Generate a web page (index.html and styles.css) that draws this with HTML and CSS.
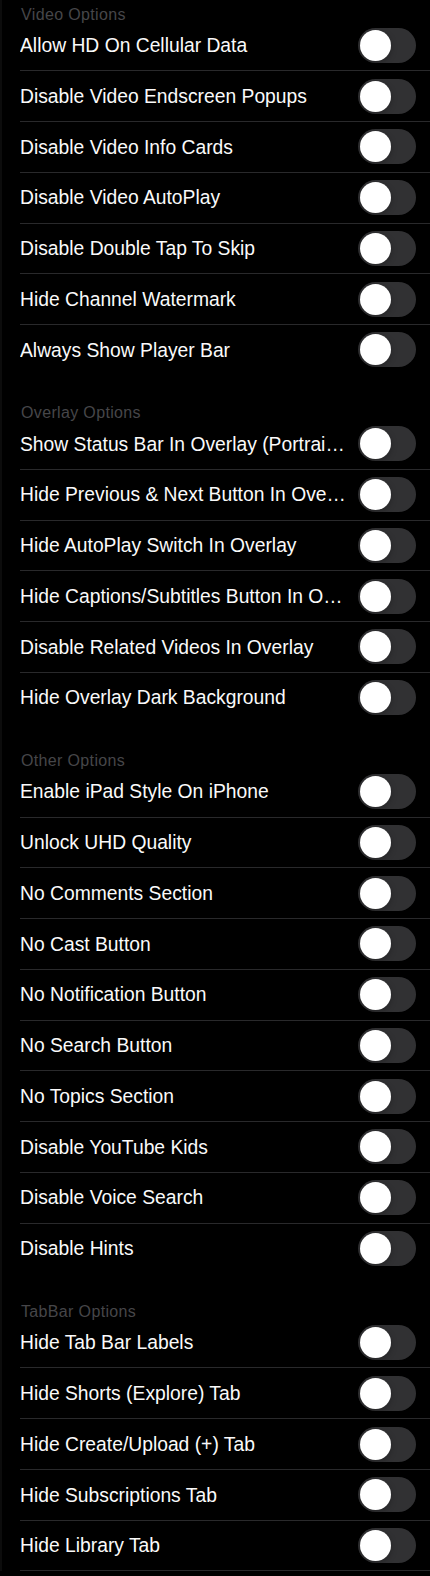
FILE: index.html
```html
<!DOCTYPE html>
<html lang="en">
<head>
<meta charset="utf-8">
<title>Settings</title>
<link rel="stylesheet" href="styles.css">
</head>
<body>
<main class="page">
  <div class="list">
    <section class="group">
      <h2 class="group-title">Video Options</h2>
      <div class="row"><span class="label">Allow HD On Cellular Data</span><span class="switch"><span class="knob"></span></span></div>
      <div class="row"><span class="label">Disable Video Endscreen Popups</span><span class="switch"><span class="knob"></span></span></div>
      <div class="row"><span class="label">Disable Video Info Cards</span><span class="switch"><span class="knob"></span></span></div>
      <div class="row"><span class="label">Disable Video AutoPlay</span><span class="switch"><span class="knob"></span></span></div>
      <div class="row"><span class="label">Disable Double Tap To Skip</span><span class="switch"><span class="knob"></span></span></div>
      <div class="row"><span class="label">Hide Channel Watermark</span><span class="switch"><span class="knob"></span></span></div>
      <div class="row"><span class="label">Always Show Player Bar</span><span class="switch"><span class="knob"></span></span></div>
    </section>
    <section class="group">
      <h2 class="group-title">Overlay Options</h2>
      <div class="row"><span class="label">Show Status Bar In Overlay (Portrai…</span><span class="switch"><span class="knob"></span></span></div>
      <div class="row"><span class="label">Hide Previous &amp; Next Button In Ove…</span><span class="switch"><span class="knob"></span></span></div>
      <div class="row"><span class="label">Hide AutoPlay Switch In Overlay</span><span class="switch"><span class="knob"></span></span></div>
      <div class="row"><span class="label">Hide Captions/Subtitles Button In O…</span><span class="switch"><span class="knob"></span></span></div>
      <div class="row"><span class="label">Disable Related Videos In Overlay</span><span class="switch"><span class="knob"></span></span></div>
      <div class="row"><span class="label">Hide Overlay Dark Background</span><span class="switch"><span class="knob"></span></span></div>
    </section>
    <section class="group">
      <h2 class="group-title">Other Options</h2>
      <div class="row"><span class="label">Enable iPad Style On iPhone</span><span class="switch"><span class="knob"></span></span></div>
      <div class="row"><span class="label">Unlock UHD Quality</span><span class="switch"><span class="knob"></span></span></div>
      <div class="row"><span class="label">No Comments Section</span><span class="switch"><span class="knob"></span></span></div>
      <div class="row"><span class="label">No Cast Button</span><span class="switch"><span class="knob"></span></span></div>
      <div class="row"><span class="label">No Notification Button</span><span class="switch"><span class="knob"></span></span></div>
      <div class="row"><span class="label">No Search Button</span><span class="switch"><span class="knob"></span></span></div>
      <div class="row"><span class="label">No Topics Section</span><span class="switch"><span class="knob"></span></span></div>
      <div class="row"><span class="label">Disable YouTube Kids</span><span class="switch"><span class="knob"></span></span></div>
      <div class="row"><span class="label">Disable Voice Search</span><span class="switch"><span class="knob"></span></span></div>
      <div class="row"><span class="label">Disable Hints</span><span class="switch"><span class="knob"></span></span></div>
    </section>
    <section class="group">
      <h2 class="group-title">TabBar Options</h2>
      <div class="row"><span class="label">Hide Tab Bar Labels</span><span class="switch"><span class="knob"></span></span></div>
      <div class="row"><span class="label">Hide Shorts (Explore) Tab</span><span class="switch"><span class="knob"></span></span></div>
      <div class="row"><span class="label">Hide Create/Upload (+) Tab</span><span class="switch"><span class="knob"></span></span></div>
      <div class="row"><span class="label">Hide Subscriptions Tab</span><span class="switch"><span class="knob"></span></span></div>
      <div class="row"><span class="label">Hide Library Tab</span><span class="switch"><span class="knob"></span></span></div>
    </section>
  </div>
</main>
</body>
</html>
```

FILE: styles.css
```css
html, body {
  margin: 0;
  padding: 0;
  background: #000;
}

body {
  font-family: "Liberation Sans", Arial, sans-serif;
  color: #fff;
  overflow: hidden;
}

.page {
  min-height: 1576px;
  box-shadow: inset 2px 0 0 #0c0c0c;
}

.list {
  margin-top: -22.8px;
}

.group {
  display: flex;
  flex-direction: column;
}

.group-title {
  height: 43.3px;
  margin: 0;
  padding: 0 0 0 21px;
  box-sizing: border-box;
  display: flex;
  align-items: flex-end;
  font-size: 16px;
  font-weight: normal;
  line-height: 12px;
  letter-spacing: 0.35px;
  color: #464649;
}

.row {
  height: 50.75px;
  margin-left: 20px;
  padding-right: 14px;
  box-sizing: border-box;
  border-bottom: 1px solid #29292b;
  display: flex;
  align-items: center;
  gap: 12px;
}

.group:not(:last-child) .row:last-child {
  border-bottom-color: transparent;
}

.label {
  flex: 1;
  min-width: 0;
  padding-top: 1.5px;
  font-size: 19.3px;
  white-space: nowrap;
  overflow: hidden;
  text-overflow: ellipsis;
  color: #fafafa;
}

.switch {
  flex: none;
  width: 58px;
  height: 35px;
  border-radius: 17.5px;
  background: #313133;
  display: flex;
  align-items: center;
  padding-left: 2px;
  box-sizing: border-box;
}

.knob {
  width: 31px;
  height: 31px;
  border-radius: 50%;
  background: #fff;
  box-shadow: 0 2px 6px rgba(0, 0, 0, 0.25);
}
```
